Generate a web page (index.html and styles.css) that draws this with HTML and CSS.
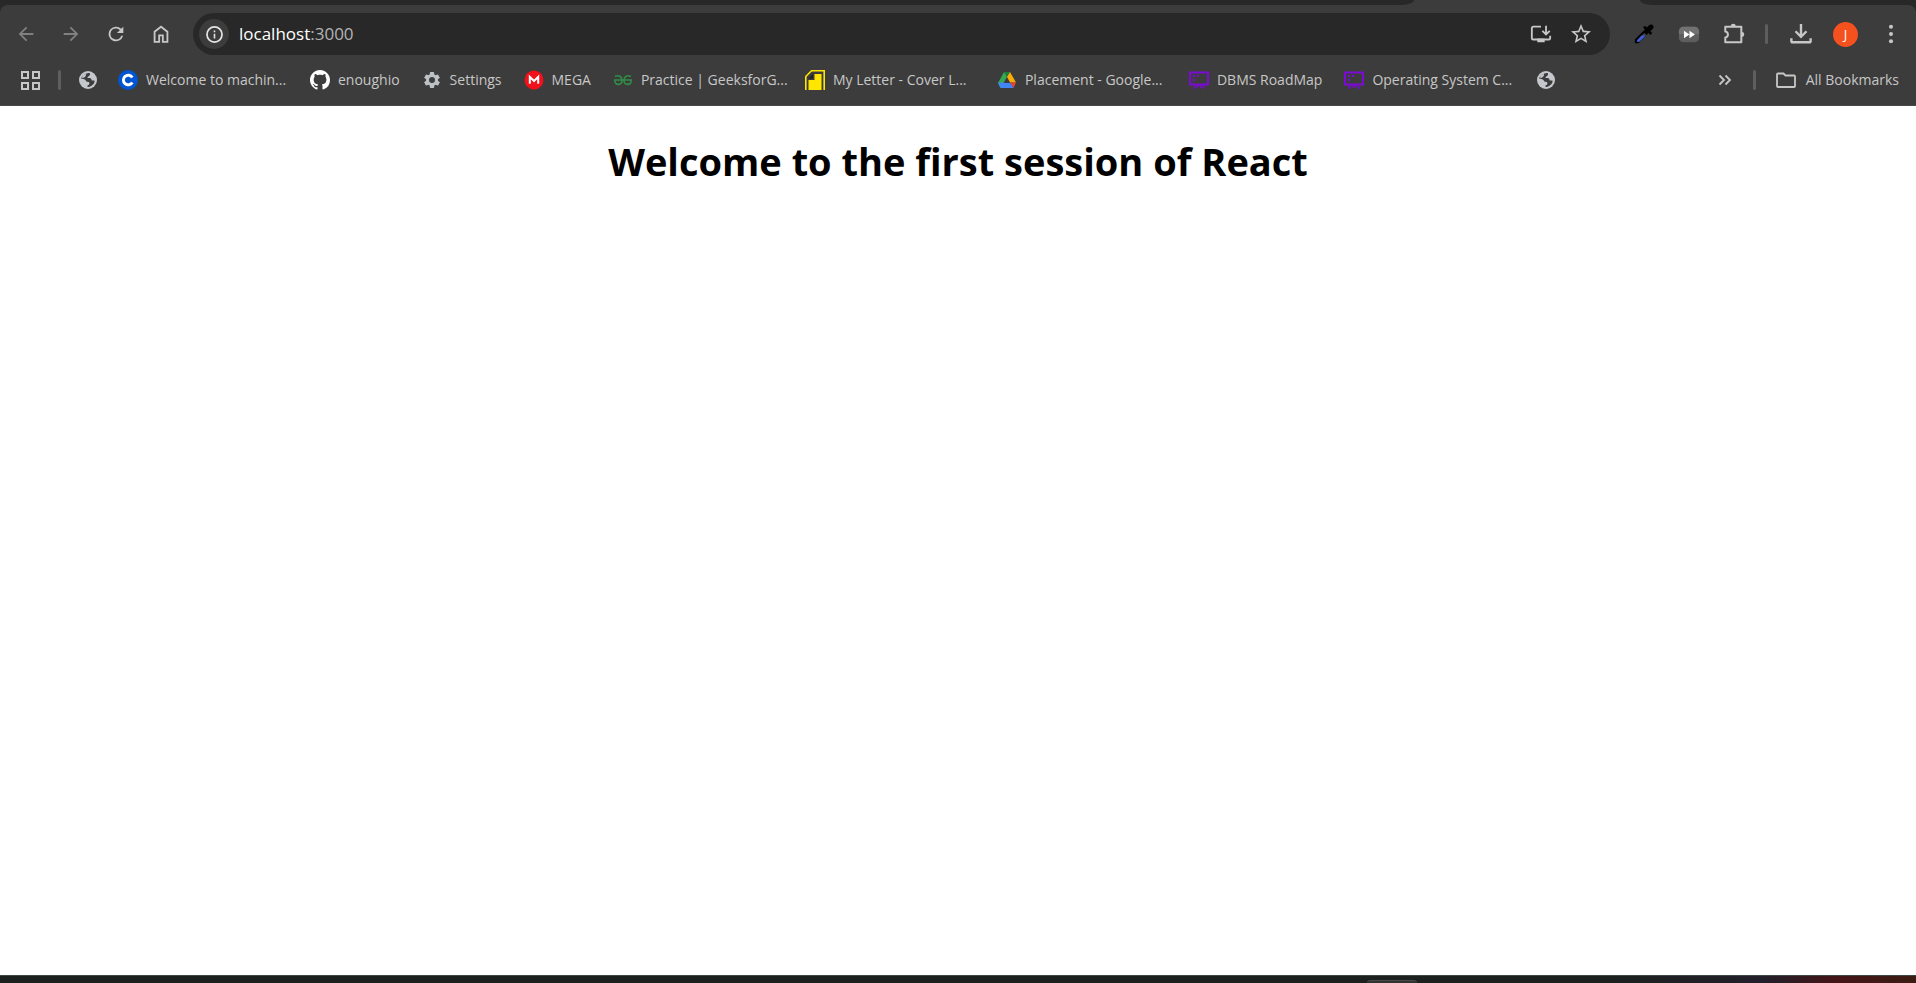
FILE: index.html
```
<!DOCTYPE html>
<html lang="en">
<head>
<meta charset="utf-8">
<title>React App</title>
<link rel="stylesheet" href="styles.css">
</head>
<body>
<svg class="defs" aria-hidden="true">
  <symbol id="globe" viewBox="0 0 20 20">
    <circle cx="10" cy="10" r="9" fill="#c4c7cc"/>
    <path d="M3 8.500Q4.500 4 10.500 3L12 3.300Q12.500 5 11 6Q9 7 9.500 8H12Q13.500 8.300 13.700 10.500H16.500Q17 13.500 13.500 15.800Q11 17.300 9.500 17V15.500Q11.500 15 11.500 13Q11.300 11.700 9 11.700Q8 11.500 7.500 10Q6 8.500 3 8.500z" fill="#3c3c3c"/>
    <path d="M3.500 7.500Q5 4.500 8 3.800Q8.500 6 6.500 7.300Q5 8.200 3.500 7.500z" fill="#c4c7cc"/>
  </symbol>
  <symbol id="board" viewBox="0 0 20 20">
    <path d="M1 2.500h18v12H1z" fill="none" stroke="#7d0ad6" stroke-width="2"/>
    <path d="M6.500 15l-2 4M13.500 15l2 4M9 15l-1 3M11 15l1 3" fill="none" stroke="#7d0ad6" stroke-width="1.500"/>
    <path d="M4 5h2v2H4zM8 5h2v2H8zM4 9h2v2H4z" fill="#7d0ad6"/>
  </symbol>
</svg>
<div class="browser">
  <div class="tabstrip"><span class="tabs-before"></span><span class="tab-active"></span><span class="tabs-after"></span></div>
  <header class="chrome">
    <nav class="toolbar" aria-label="Browser toolbar">
      <div class="nav-buttons">
        <button class="tool dim" aria-label="Back"><svg viewBox="0 0 24 24"><path d="M20 11H7.800l5.600-5.600L12 4l-8 8 8 8 1.400-1.400L7.800 13H20z"/></svg></button>
        <button class="tool dim" aria-label="Forward"><svg viewBox="0 0 24 24"><path d="M12 4l-1.400 1.400 5.600 5.600H4v2h12.200l-5.600 5.600L12 20l8-8z"/></svg></button>
        <button class="tool" aria-label="Reload"><svg viewBox="0 0 24 24"><path d="M17.650 6.350A8 8 0 1 0 19.730 14h-2.080A6 6 0 1 1 12 6c1.660 0 3.140.69 4.220 1.780L13 11h7V4z"/></svg></button>
        <button class="tool" aria-label="Home"><svg viewBox="0 0 24 24"><path d="M5 20.500V9.500L12 4l7 5.500v11h-5v-7h-4v7z" fill="none" stroke="currentColor" stroke-width="2"/></svg></button>
      </div>
      <div class="omnibox">
        <button class="site-info" aria-label="Site information"><svg viewBox="0 0 24 24"><circle cx="12" cy="12" r="9.500" fill="none" stroke="currentColor" stroke-width="2.200"/><path d="M11 11h2v6h-2zM11 7h2v2h-2z"/></svg></button>
        <div class="address" role="textbox" aria-label="Address"><span class="host">localhost</span>:3000</div>
        <button class="tool" aria-label="Install app"><svg viewBox="0 0 24 24"><path d="M12 4H3.500A1.500 1.500 0 0 0 2 5.500v11A1.500 1.500 0 0 0 3.500 18h17a1.500 1.500 0 0 0 1.500-1.500V14M17.500 3v9M13.500 8.500l4 4 4-4" fill="none" stroke="currentColor" stroke-width="2"/><path d="M8 17h8v4H8z"/></svg></button>
        <button class="tool" aria-label="Bookmark this page"><svg viewBox="1 1 22 22"><path d="M22 9.240l-7.190-.62L12 2 9.190 8.630 2 9.240l5.460 4.730L5.820 21 12 17.270 18.180 21l-1.630-7.030zM12 15.400l-3.760 2.270 1-4.280-3.320-2.880 4.380-.38L12 6.100l1.710 4.040 4.380.38-3.320 2.880 1 4.280z"/></svg></button>
      </div>
      <div class="extensions">
        <button class="tool" aria-label="Color picker"><svg viewBox="0 0 24 24"><path d="M2 22v-4L13 7l-2-2 2-2 2 2 2.500-2.500c1.500-1.500 3.500-1 4.200 0 1 1.200 1 2.800 0 3.800L19 9l2 2-2 2-2-2L6 22z" fill="#000"/><path d="M4.300 18.900L12 11l3 1.500L7 20.300l-2.500.5z" fill="#3c3c3c"/><path d="M4.300 19L9.500 13.500h4.500L7.200 20.300l-2.500.5z" fill="#3f5fdc"/></svg></button>
        <button class="tool" aria-label="Video speed"><svg viewBox="0 0 24 24"><rect x="1" y="4" width="22" height="17" rx="5" fill="#5e5e5e"/><path d="M1 12V9a5 5 0 0 1 5-5h12a5 5 0 0 1 5 5v3z" fill="#717171"/><path d="M6.500 8.500l6 4-6 4zM12.500 8.500l6 4-6 4z" fill="#fff"/></svg></button>
        <button class="tool" aria-label="Extensions"><svg viewBox="0 0 24 24"><path d="M2.500 4h17.500v17H2.500v-5.200c3.800-.5 3.800-6.100 0-6.600z" fill="none" stroke="currentColor" stroke-width="2.200" stroke-linejoin="round"/><path d="M8.500 3.500a2.700 2.700 0 0 1 5.400 0zM20.500 9.800a2.700 2.700 0 0 1 0 5.400z"/></svg></button>
        <span class="divider"></span>
        <button class="tool" aria-label="Downloads"><svg viewBox="0 0 24 24"><path d="M12 1v13M6 9l6 6 6-6M1.500 16.500v3q0 1.500 1.500 1.500h18q1.500 0 1.500-1.500v-3" fill="none" stroke="currentColor" stroke-width="2.600"/></svg></button>
        <button class="tool" aria-label="Profile"><span class="avatar">J</span></button>
        <button class="tool" aria-label="Menu"><svg viewBox="0 0 24 24"><circle cx="12" cy="4" r="2.200"/><circle cx="12" cy="12" r="2.200"/><circle cx="12" cy="20" r="2.200"/></svg></button>
      </div>
    </nav>
    <nav class="bookmarks" aria-label="Bookmarks">
      <button class="apps" aria-label="Apps"><svg viewBox="0 0 20 20"><path d="M2 2h6v6H2zM13 2h6v6h-6zM2 13h6v6H2zM13 13h6v6h-6z" fill="none" stroke="currentColor" stroke-width="2"/></svg></button>
      <span class="divider"></span>
      <a class="mark icon-only" href="#" aria-label="Bookmark"><svg><use href="#globe"/></svg></a>
      <a class="mark" href="#"><svg viewBox="0 0 20 20"><circle cx="10" cy="10" r="10" fill="#0056d2"/><path d="M14.300 7.500a4.800 4.800 0 1 0 0 5" fill="none" stroke="#fff" stroke-width="3"/></svg><span class="label wide">Welcome to machin...</span></a>
      <a class="mark" href="#"><svg viewBox="0 0 16 16"><path d="M8 0C3.580 0 0 3.580 0 8c0 3.540 2.290 6.530 5.470 7.590.4.070.55-.17.55-.38 0-.19-.01-.82-.01-1.490-2.010.37-2.530-.49-2.690-.94-.09-.23-.48-.94-.82-1.130-.28-.15-.68-.52-.01-.53.63-.01 1.080.58 1.230.82.72 1.210 1.870.87 2.330.66.070-.52.280-.87.510-1.070-1.780-.2-3.640-.89-3.640-3.950 0-.87.310-1.590.82-2.150-.08-.2-.36-1.020.08-2.120 0 0 .67-.21 2.200.82.640-.18 1.320-.27 2-.27s1.360.09 2 .27c1.530-1.040 2.200-.82 2.200-.82.440 1.100.160 1.920.080 2.120.510.560.820 1.270.820 2.150 0 3.070-1.870 3.750-3.650 3.950.290.250.540.730.540 1.480 0 1.070-.01 1.930-.01 2.200 0 .210.150.460.550.380A8 8 0 0 0 16 8c0-4.420-3.580-8-8-8z" fill="#fff"/></svg><span class="label">enoughio</span></a>
      <a class="mark" href="#"><svg viewBox="0 0 24 24"><path d="M19.140 12.940c.04-.3.060-.61.060-.94s-.02-.64-.07-.94l2.030-1.580a.5.500 0 0 0 .12-.61l-1.920-3.320a.5.500 0 0 0-.59-.22l-2.390.96a7 7 0 0 0-1.620-.94l-.36-2.540A.5.500 0 0 0 13.920 2.400h-3.840a.5.500 0 0 0-.47.410l-.36 2.540a7 7 0 0 0-1.620.94l-2.390-.96a.5.500 0 0 0-.59.220L2.740 8.870a.5.500 0 0 0 .12.610l2.030 1.580a7 7 0 0 0 0 1.880l-2.030 1.580a.5.500 0 0 0-.12.610l1.920 3.320c.12.220.37.290.59.220l2.390-.96c.5.380 1.030.7 1.620.94l.36 2.540c.05.240.24.410.48.410h3.840c.24 0 .44-.17.470-.41l.36-2.540a7 7 0 0 0 1.620-.94l2.390.96c.22.080.47 0 .59-.22l1.920-3.320a.5.500 0 0 0-.12-.61zM12 15.600A3.600 3.600 0 1 1 12 8.400a3.600 3.600 0 0 1 0 7.200z" fill="#bdc1c6"/></svg><span class="label">Settings</span></a>
      <a class="mark" href="#"><svg viewBox="0 0 20 20"><circle cx="10" cy="10" r="9.500" fill="#f0111a"/><path d="M5.800 13.800V6.800L10 11l4.200-4.200v7" fill="none" stroke="#fff" stroke-width="2"/></svg><span class="label">MEGA</span></a>
      <a class="mark" href="#"><svg viewBox="0 0 20 20"><path d="M1 10h18M2 6.500c4-2 7 0 7 4 0 5-7 5-7 1V10M18 6.500c-4-2-7 0-7 4 0 5 7 5 7 1V10" fill="none" stroke="#2f8d46" stroke-width="1.600"/></svg><span class="label wide">Practice | GeeksforG...</span></a>
      <a class="mark" href="#"><svg viewBox="0 0 20 20"><path d="M.8 20V6.500l5.700-5.700h12.700V20" fill="none" stroke="#ffe600" stroke-width="1.600"/><path d="M3.500 20V10h6V4h7v16z" fill="#ffe600"/><path d="M3.500 8.500L8 4v4.500z" fill="#222"/></svg><span class="label wide">My Letter - Cover L...</span></a>
      <a class="mark" href="#"><svg viewBox="0 0 20 20"><path d="M7 2h6l-3 5z" fill="#188038"/><path d="M7 2l3 5-6.500 11L1 13z" fill="#34a853"/><path d="M13 2l6 10.500h-6L10 7z" fill="#fbab05"/><path d="M13 12.500h6L16.500 18z" fill="#ea4335"/><path d="M1 12.500h12l3.500 5.500h-13z" fill="#4285f4"/><path d="M10 8l-3 5h6z" fill="#3c3c3c"/></svg><span class="label wide">Placement - Google...</span></a>
      <a class="mark" href="#"><svg><use href="#board"/></svg><span class="label">DBMS RoadMap</span></a>
      <a class="mark" href="#"><svg><use href="#board"/></svg><span class="label wide">Operating System C...</span></a>
      <a class="mark icon-only" href="#" aria-label="Bookmark"><svg><use href="#globe"/></svg></a>
      <button class="overflow" aria-label="More bookmarks"><svg viewBox="0 0 20 20"><path d="M4.500 5.500L9 10l-4.500 4.500M10.500 5.500L15 10l-4.500 4.500" fill="none" stroke="currentColor" stroke-width="1.800"/></svg></button>
      <span class="divider"></span>
      <button class="mark all"><svg viewBox="0 0 20 20"><path d="M1 16V4.500Q1 3.500 2 3.500h5.500l2 2H18q1 0 1 1V16q0 1-1 1H2q-1 0-1-1z" fill="none" stroke="currentColor" stroke-width="1.800"/></svg><span class="label">All Bookmarks</span></button>
    </nav>
  </header>
  <main class="page"><h1>Welcome to the first session of React</h1></main>
  <footer class="taskbar"><span class="task"></span></footer>
</div>
</body>
</html>
```
FILE: styles.css
```
* { box-sizing: border-box; }
body {
  margin: 0;
  font-family: "Open Sans", "Noto Sans", sans-serif;
  color: #c7c7c7;
}
button {
  padding: 0;
  border: 0;
  background: none;
  color: inherit;
  font: inherit;
}
svg { display: block; fill: currentColor; flex: none; }
.defs { position: absolute; width: 0; height: 0; }
.browser { display: flex; flex-direction: column; min-height: 100vh; background: #282828; }

.tabstrip { display: grid; grid-template-columns: 1fr 226px 276px; height: 5px; background: #3c3c3c; }
.tabs-before { background: #282828; border-bottom-right-radius: 12px 5px; }
.tabs-after { background: #282828; border-bottom-left-radius: 12px 5px; }

.chrome {
  background: #3c3c3c;
  border-bottom: 1px solid #4a4a4a;
  border-radius: 8px 8px 0 0;
}
.toolbar { display: flex; align-items: center; padding: 8px 3px 0; }
.nav-buttons, .extensions { display: flex; align-items: center; }
.nav-buttons { padding-right: 10px; }
.tool { display: flex; align-items: center; justify-content: center; width: 45px; height: 42px; }
.tool svg { width: 22px; height: 22px; }
.dim { color: #808080; }
.omnibox {
  display: flex;
  flex: 1;
  align-items: center;
  height: 42px;
  padding: 0 9px 0 6px;
  border-radius: 21px;
  background: #282828;
}
.omnibox .tool { width: 40px; }
.site-info {
  display: flex;
  align-items: center;
  justify-content: center;
  width: 30px;
  height: 30px;
  border-radius: 50%;
  background: #3c3c3c;
  color: #e3e3e3;
}
.site-info svg { width: 19px; height: 19px; }
.address { flex: 1; padding-left: 10px; font-size: 17px; line-height: 24px; color: #b4b4b4; }
.host { color: #fff; }
.extensions { padding-left: 11px; }
.divider { width: 3px; height: 20px; border-radius: 2px; background: #5e5e5e; }
.extensions .divider { margin: 0 10px 0 9px; }
.avatar {
  width: 25px;
  height: 25px;
  border-radius: 50%;
  background: #f4511e;
  color: #fff;
  font-size: 13px;
  line-height: 25px;
  text-align: center;
}

.bookmarks { display: flex; align-items: center; height: 50px; padding: 0 17px 0 20px; }
.apps svg, .mark svg, .overflow svg { width: 20px; height: 20px; }
.bookmarks .divider { margin: 0 17px 0 18px; }
.mark { display: flex; align-items: center; gap: 8px; margin-right: 22px; color: inherit; text-decoration: none; }
.icon-only { margin-right: 20px; }
.label { font-size: 14px; line-height: 20px; white-space: nowrap; }
.wide { width: 142px; }
.overflow { margin-left: auto; }
.bookmarks .overflow + .divider { margin-right: 20px; }
.all { gap: 10px; margin-right: 0; }

.page { flex: 1; background: #fff; color: #000; }
h1 { margin: 28px 0 0; font-size: 38px; line-height: 54px; font-weight: 700; text-align: center; }

.taskbar {
  display: flex;
  height: 8px;
  border-top: 1px solid #3c4642;
  background: linear-gradient(90deg, #1c201f 0 84%, #221f2a 92%, #451417 96%, #3b1c13);
}
.task { width: 50px; height: 3px; margin: auto 499px 0 auto; border-top: 1px solid #4a4a4a; border-radius: 4px 4px 0 0; background: #303332; }
```
